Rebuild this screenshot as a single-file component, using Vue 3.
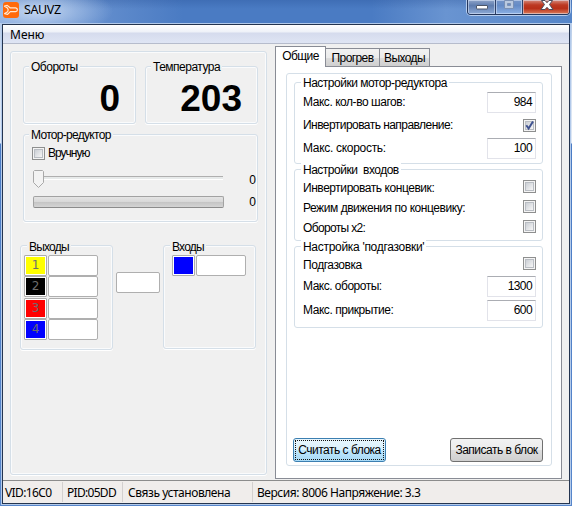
<script setup>
import { ref } from 'vue'

const outputs = ref([
  { id: 1, color: '#ffff00' },
  { id: 2, color: '#000000' },
  { id: 3, color: '#ff0000' },
  { id: 4, color: '#0000ff' },
])

const groups = ref([
  {
    key: 'motor',
    title: 'Настройки мотор-редуктора',
    rows: [
      { label: 'Макс. кол-во шагов:', value: '984' },
      { label: 'Инвертировать направление:', checked: true },
      { label: 'Макс. скорость:', value: '100' },
    ],
  },
  {
    key: 'inputs',
    title: 'Настройки \u00a0входов',
    rows: [
      { label: 'Инвертировать концевик:', checked: false },
      { label: 'Режим движения по концевику:', checked: false },
      { label: 'Обороты x2:', checked: false },
    ],
  },
  {
    key: 'idle',
    title: "Настройка 'подгазовки'",
    rows: [
      { label: 'Подгазовка', checked: false },
      { label: 'Макс. обороты:', value: '1300' },
      { label: 'Макс. прикрытие:', value: '600' },
    ],
  },
])
</script>

<template>
  <div class="window">
    <header class="titlebar">
      <svg class="app-icon" viewBox="0 0 16 16">
        <rect width="16" height="16" rx="3" fill="#ff6a0c" />
        <path d="M1.5 4.2 L4.3 3.4 L7 5.8 H12.6 Q14.4 6 14.4 7.8 Q14.3 9.5 12.6 9.6 H7.3 L4.6 12.3 L1.6 11.6 L4.6 9.8 L5.2 7.8 L4.4 6.1 Z" fill="none" stroke="#ffe9d5" stroke-width="1.2" stroke-linejoin="round" />
      </svg>
      <span class="caption">SAUVZ</span>
      <div class="controls">
        <span class="ctl min"><svg width="28" height="14"><rect x="8.5" y="5.5" width="11" height="3.500" rx="0.5" fill="#fff" stroke="#4c5668" /></svg></span>
        <span class="ctl max"><svg width="26" height="14"><path d="M8.5 0.500h9v8h-9z M11.500 3.500h3v2h-3z" fill="#b9c9e0" fill-rule="evenodd" stroke="#7a90b4" /></svg></span>
        <span class="ctl close"><svg width="46" height="14"><path d="M18.500 0.500h3.500l2 2.200 2-2.200h3.500l-3 4 3.500 5h-4l-2-2.200-2 2.200h-4l3.500-5z" fill="#fff" stroke="#4b4b5c" /></svg></span>
      </div>
    </header>

    <div class="client">
      <nav class="menu"><span>Меню</span></nav>

      <main class="main">
        <section class="panel">
          <div class="readouts">
            <div class="group rpm">
              <span class="legend">Обороты</span>
              <span class="big">0</span>
            </div>
            <div class="group temp">
              <span class="legend">Температура</span>
              <span class="big">203</span>
            </div>
          </div>

          <div class="group motor-box">
            <span class="legend">Мотор-редуктор</span>
            <label class="manual"><span class="check"><i></i></span><span class="text">Вручную</span></label>
            <div class="line slide">
              <div class="slider">
                <svg class="thumb" width="11" height="19"><path d="M1.500 0.500h8l1 1v11l-5 5-5-5v-11z" fill="#f3f3f3" stroke="#a9a9a9" /></svg>
                <div class="track"></div>
              </div>
              <span class="num">0</span>
            </div>
            <div class="line">
              <div class="progress"></div>
              <span class="num">0</span>
            </div>
          </div>

          <div class="io">
            <div class="group outs">
              <span class="legend">Выходы</span>
              <div v-for="o in outputs" :key="o.id" class="pin" :class="'pin' + o.id">
                <span class="swatch"><b :style="{ background: o.color }">{{ o.id }}</b></span>
                <span class="box"></span>
              </div>
            </div>
            <span class="box middle"></span>
            <div class="group ins">
              <span class="legend">Входы</span>
              <div class="pin">
                <span class="swatch"><b class="blue"></b></span>
                <span class="box"></span>
              </div>
            </div>
          </div>
        </section>

        <section class="tabs">
          <div class="tabbar">
            <span class="tab active">Общие</span>
            <span class="tab second">Прогрев</span>
            <span class="tab third">Выходы</span>
          </div>
          <div class="page">
            <div class="sheet">
              <div v-for="g in groups" :key="g.key" class="group settings" :class="g.key">
                <span class="legend">{{ g.title }}</span>
                <div v-for="(r, i) in g.rows" :key="i" class="row" :class="'r' + i">
                  <span class="label">{{ r.label }}</span>
                  <span v-if="r.value" class="input">{{ r.value }}</span>
                  <span v-else class="check"><i></i>
                    <svg v-if="r.checked" class="tick" width="13" height="13"><path d="M3.300 6.200L5.600 9.500L10 2.500" fill="none" stroke="#3f5290" stroke-width="2" /></svg>
                  </span>
                </div>
              </div>
              <div class="actions">
                <button class="btn focused"><span>Считать с блока</span></button>
                <button class="btn"><span>Записать в блок</span></button>
              </div>
            </div>
          </div>
        </section>
      </main>

      <footer class="status">
        <span class="cell vid">VID:16C0</span>
        <span class="cell pid">PID:05DD</span>
        <span class="cell link">Связь установлена</span>
        <span class="cell ver">Версия: 8006 Напряжение: 3.3</span>
      </footer>
    </div>
  </div>
</template>

<style>
body { overflow: hidden; }
</style>

<style scoped>
* { box-sizing: border-box; }
.window {
  width: 572px; height: 506px; display: flex; flex-direction: column;
  font: 12px/14px "Liberation Sans", Arial, sans-serif; color: #000; white-space: nowrap;
  background: linear-gradient(#a6bfe2 0, #d3e0f2 60px, #dfe8f5 143px, #4a7bc4 144px, #5786cb 506px);
}
.titlebar {
  height: 24px; flex: none; display: flex; padding-left: 3px;
  background:
    radial-gradient(ellipse 75px 26px at 38px 11px, rgba(225,236,250,.75) 0%, rgba(190,211,240,.5) 50%, transparent 100%),
    linear-gradient(rgba(30,70,140,.25), transparent 9px),
    linear-gradient(90deg, #7fa3d9, #4a7bc3 32%, #4a7bc3 65%, #6994d1 78%, #5585c8 100%);
  border-bottom: 1px solid #b9d0ef;
}
.app-icon { width: 16px; height: 16px; margin-top: 2px; }
.caption { font: 12.5px/16px "Noto Sans", sans-serif; margin: 2px 0 0 5px; letter-spacing: -.4px; }
.controls {
  margin-left: auto; margin-right: 2px; width: 103px; height: 15px; display: flex;
  border: 1px solid #24365c; border-top: 0; border-radius: 0 0 4px 4px; overflow: hidden;
  box-shadow: 0 0 0 1px rgba(210,226,248,.75);
}
.ctl { display: block; height: 14px; box-shadow: inset 0 0 0 1px rgba(230,240,255,.5); }
.ctl svg { display: block; }
.min { width: 28px; border-right: 1px solid #2d4068; background: linear-gradient(#8fa5c9, #5e7cae 40%, #8daad6); }
.max { width: 27px; border-right: 1px solid #2d4068; background: linear-gradient(#7695c8, #648bc6 40%, #8cb0e4); }
.close { width: 46px; background: linear-gradient(#d68c7e, #bd3a23 35%, #b82f18 60%, #dc7d5c); }
.client {
  width: 568px; height: 480px; margin-left: 2px; display: flex; flex-direction: column;
  border: 1px solid #24344f; background: #f0f0f0; box-shadow: 0 0 0 1px #b3caea;
}
.menu {
  height: 19px; flex: none; padding-left: 7px; border-bottom: 1px solid #b6bccc;
  background: linear-gradient(#fff, #eef1f8 7px, #d5dbed 8px, #dfe5f4 18px);
  font: 12px/19px "Noto Sans", sans-serif;
}
.main { height: 436px; flex: none; display: flex; }

.panel {
  margin: 7px 0 0 7px; width: 257px; height: 424px; padding: 14px 0 0 9px;
  border: 1px solid #d5dfe8; border-radius: 3px; box-shadow: inset 0 0 0 1px #fafbfc, 0 1px 0 #fff;
  display: flex; flex-direction: column;
}
.group {
  border: 1px solid #d5dfe8; border-radius: 3px; box-shadow: inset 0 0 0 1px #fafbfc, 0 1px 0 #fff;
  display: flex; flex-direction: column;
}
.legend { align-self: flex-start; height: 14px; margin: -7px 0 0 5px; padding: 0 2px; background: #f0f0f0; letter-spacing: -.5px; }
.motor-box .legend { letter-spacing: -.7px; }
.io .legend { letter-spacing: -.8px; margin-left: 6px; }
.io .outs .legend { position: relative; top: 1px; }
.io .ins .legend { position: relative; top: 1px; }
.readouts { display: flex; gap: 9px; margin-left: 3px; }
.readouts .group { width: 113px; height: 58px; }
.big { align-self: flex-end; font: bold 37px/40px "Liberation Sans", Arial, sans-serif; margin: 5px 15px 0 0; }
.motor-box { margin: 10px 0 0 3px; width: 235px; height: 88px; }
.manual { display: flex; margin: 4px 0 0 8px; height: 14px; align-items: center; }
.manual .text { margin-left: 3px; letter-spacing: -1px; }
.check {
  position: relative; flex: none; width: 13px; height: 13px; border: 1px solid #8e8f8f;
  background: #f4f4f4; display: flex; align-items: center; justify-content: center;
}
.check i { width: 9px; height: 9px; border: 1px solid #b9bdc3; background: linear-gradient(135deg, #cbcfd5, #f6f6f6); }
.tick { position: absolute; left: -1px; top: -1px; }
.line { display: flex; align-items: center; height: 23px; padding: 0 1px 0 9px; }
.line.slide { margin-top: 8px; height: 22px; }
.slider { display: flex; align-items: center; width: 191px; }
.thumb { display: block; }
.track { flex: 1; height: 4px; border-top: 1px solid #afafaf; border-bottom: 1px solid #fff; background: #e7eaea; margin: 0 1px 3px 0; }
.num { margin-left: auto; padding-top: 1px; }
.progress {
  width: 191px; height: 12px; margin-top: 1px; border: 1px solid #a2a2a2; border-bottom-color: #8b8b8b; border-radius: 2px;
  background: linear-gradient(#e4e4e4, #d9d9d9 45%, #c4c4c4 50%, #d4d4d4);
}
.io { display: flex; margin: 23px 0 0 0; }
.outs { width: 93px; height: 105px; }
.ins { width: 93px; height: 104px; margin-left: 3px; }
.pin { display: flex; gap: 1px; height: 21px; margin-left: 3px; }
.outs .pin1 { margin-top: 2px; }
.outs .pin3 { margin-top: 1px; }
.ins .pin { margin: 2px 0 0 8px; }
.swatch { width: 23px; height: 21px; padding: 1px; border: 1px solid #adadad; border-radius: 1px; background: #fff; }
.swatch b { display: block; height: 17px; font: 12px/17px "DejaVu Sans", sans-serif; color: #6d6d6d; text-align: center; }
.swatch .blue { background: #0000ff; }
.box { width: 50px; height: 21px; border: 1px solid #afafaf; border-radius: 2px; background: #fff; }
.middle { width: 44px; margin: 27px 0 0 3px; }

.tabs { margin: 2px 0 0 8px; width: 287px; display: flex; flex-direction: column; }
.tabbar { display: flex; align-items: flex-end; height: 21px; margin-bottom: -1px; }
.tab {
  height: 19px; border: 1px solid #898c95; border-left: 0; text-align: center; line-height: 19px; letter-spacing: -.6px;
  background: linear-gradient(#f2f2f2, #ebebeb 50%, #dcdcdc 52%, #cfcfcf);
}
.tab.active { width: 51px; height: 21px; border-left: 1px solid #898c95; border-bottom: 0; background: #fff; line-height: 19px; position: relative; z-index: 1; }
.second { width: 54px; }
.third { width: 50px; }
.page { height: 413px; border: 1px solid #898c95; background: #fff; padding: 6px 0 0 10px; }
.sheet { width: 266px; height: 393px; border: 1px solid #d5dfe8; border-radius: 3px; padding: 8px 0 0 7px; display: flex; flex-direction: column; }
.settings { width: 249px; box-shadow: none; }
.settings .legend { background: #fff; margin-left: 6px; }
.motor { height: 82px; }
.inputs { height: 72px; margin-top: 5px; }
.idle { height: 82px; margin-top: 5px; }
.idle .legend { letter-spacing: -.3px; }
.row { display: flex; justify-content: space-between; align-items: center; padding: 0 6px 0 8px; height: 24px; }
.label { letter-spacing: -.45px; }
.motor .r1 { height: 22px; }
.motor .r2 { height: 25px; }
.motor .label { padding-bottom: 1px; }
.motor .r1 .label { letter-spacing: -.55px; }
.motor .r2 .label { letter-spacing: -.3px; }
.inputs .row { height: 20px; }
.inputs .r2 .label { letter-spacing: -.65px; }
.inputs .label, .idle .r0 .label { padding-top: 2px; }
.inputs .check { margin-bottom: 1px; }
.idle .r0 { height: 22px; margin-top: -1px; }
.idle .r1 { margin-top: -1px; }
.idle .r1 .label { letter-spacing: -.5px; }
.idle .check { margin-bottom: 2px; }
.input {
  width: 49px; height: 21px; border: 1px solid #e2e3ea; border-top-color: #abadb3; background: #fff;
  text-align: right; padding-right: 3px; line-height: 19px; letter-spacing: -.6px;
}
.actions { margin-top: 110px; display: flex; justify-content: space-between; padding: 0 8px 0 0; margin-left: -1px; }
.btn {
  width: 93px; height: 24px; padding: 1px; border: 1px solid #707070; border-radius: 3px;
  font: 12px/18px "Liberation Sans", Arial, sans-serif; letter-spacing: -.5px; color: #000; white-space: nowrap;
  background: linear-gradient(#f2f2f2, #ebebeb 50%, #dddddd 52%, #cfcfcf);
}
.btn span { display: block; height: 20px; border: 1px solid transparent; }
.btn.focused { border-color: #3c7fb1; background: linear-gradient(#e9f6fd, #d9f0fc 50%, #bee6fd 52%, #a7d9f5); }
.btn.focused span { border: 1px dotted #111; }

.status {
  height: 23px; flex: none; display: flex; border-top: 1px solid #8c8c8c; background: #f0edeb;
  font: 12px/22px "Noto Sans", sans-serif;
}
.cell { padding-left: 5px; margin-top: 1px; border-right: 1px solid #d3d0cf; letter-spacing: -.45px; height: 20px; }
.vid { width: 60px; padding-left: 2px; letter-spacing: -.6px; }
.pid { width: 60px; padding-left: 4px; letter-spacing: -.7px; }
.link { width: 130px; }
.ver { flex: 1; border-right: 0; padding-left: 4px; letter-spacing: -.45px; }
</style>
